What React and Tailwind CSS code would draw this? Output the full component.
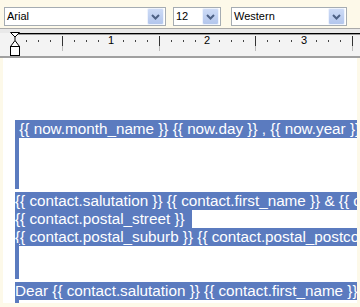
import React from "react";

const SEL = "bg-[#5b7bbf]";

function Chevron() {
  return (
    <svg width="9" height="6" viewBox="0 0 9 6">
      <path d="M1 1 L4.5 4.5 L8 1" fill="none" stroke="#4d6185" strokeWidth="2" />
    </svg>
  );
}

function Select({ className, text }) {
  return (
    <div className={`flex h-[19px] items-center border border-[#a5acb2] bg-white ${className}`}>
      <span className="flex-1 pl-[2px] text-[11px] leading-[17px] text-black">{text}</span>
      <div className="mr-[1px] flex h-[17px] w-[17px] items-center justify-center rounded-[2px] border border-[#eef3fd] bg-gradient-to-b from-[#cddbf6] to-[#b3c6ec]">
        <Chevron />
      </div>
    </div>
  );
}

function Ruler() {
  const unit = 96.5 / 8;
  const marks = [];
  for (let i = 1; 14 + i * unit < 362; i++) {
    const x = Math.round(14 + i * unit);
    if (i % 8 === 0) {
      marks.push(
        <text key={i} x={x} y={16} fontSize="11" textAnchor="middle" fontFamily="Liberation Sans, Arial, sans-serif" fill="#000">
          {i / 8}
        </text>
      );
    } else if (i % 4 === 0) {
      marks.push(
        <g key={i}>
          <rect x={x} y={8} width="1" height="10" fill="#333" />
          <rect x={x} y={18} width="1" height="5" fill="#bbb" />
        </g>
      );
    } else {
      marks.push(<rect key={i} x={x} y={12} width="1" height="2" fill="#444" />);
    }
  }
  return (
    <svg width="360" height="30" className="block">
      <rect x="0" y="0" width="360" height="30" fill="#f3f3f3" />
      <rect x="0" y="0" width="360" height="5" fill="#e9e9e9" />
      <rect x="0" y="0" width="360" height="1" fill="#a9a9a9" />
      <rect x="14" y="5" width="346" height="1" fill="#000" />
      <rect x="14" y="6" width="346" height="1" fill="#9a9a9a" />
      {marks}
      {/* indent marker */}
      <path d="M10.5 4.5 L19.5 4.5 L15 9 Z" fill="#fff" stroke="#000" />
      <path d="M15 12.5 L10.5 18.5 L19.5 18.5 Z" fill="#fff" stroke="#000" />
      <path d="M15 9 L15 12.5" stroke="#000" />
      <rect x="10.5" y="18.5" width="9" height="9" fill="#fff" stroke="#000" />
      <rect x="0" y="28" width="360" height="2" fill="#a0a0a0" />
    </svg>
  );
}

const lines = [
  " {{ now.month_name }} {{ now.day }} , {{ now.year }}",
  "",
  "",
  "",
  "{{ contact.salutation }} {{ contact.first_name }} & {{ contact.last_name }}",
  "{{ contact.postal_street }}",
  "{{ contact.postal_suburb }} {{ contact.postal_postcode }}",
  "",
  "",
  "Dear {{ contact.salutation }} {{ contact.first_name }},",
  "",
];

export default function App() {
  return (
    <div className="flex h-[307px] w-[360px] flex-col overflow-hidden bg-[#fdf9e9] font-['Liberation_Sans',Arial,sans-serif]">
      <div className="flex h-[28px] items-start pt-[7px] pl-[4px]">
        <Select className="w-[162px]" text="Arial" />
        <Select className="ml-[7px] w-[48px]" text="12" />
        <Select className="ml-[10px] w-[116px]" text="Western" />
      </div>
      <Ruler />
      <div className="mr-[3px] mb-[4px] ml-[3px] flex-1 overflow-hidden bg-white pt-[59px] pl-[12px]">
        {lines.map((t, i) => (
          <div key={i} className="h-[18px] whitespace-pre">
            {t ? (
              <span
                className={`inline-block h-[18px] text-[15.25px] leading-[18px] text-white ${SEL} ${
                  i === 5 ? "pr-[7px]" : ""
                }`}
              >
                {t}
              </span>
            ) : (
              <span className={`inline-block h-[18px] w-[4px] ${SEL}`} />
            )}
          </div>
        ))}
      </div>
    </div>
  );
}
